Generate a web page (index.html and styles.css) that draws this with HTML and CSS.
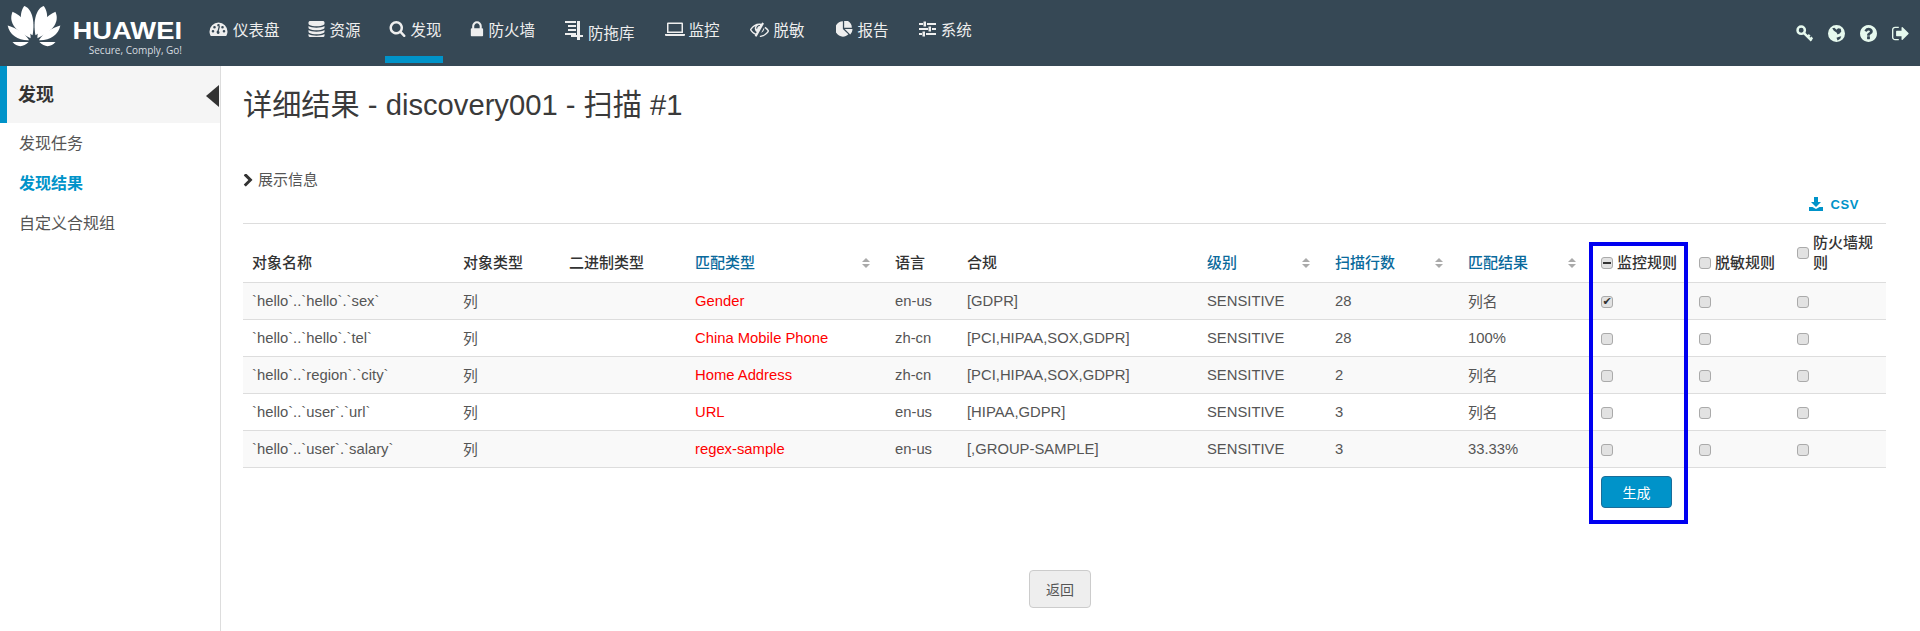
FILE: index.html
```html
<!DOCTYPE html>
<html lang="zh-CN">
<head>
    <meta charset="UTF-8">
    <title>详细结果 - discovery001 - 扫描 #1</title>
    <link rel="stylesheet" href="styles.css">
</head>
<body>

    <header class="topbar">
        <a class="brand" href="#">
            <svg class="brand__mark" viewBox="0 0 54 42">
                <g id="petals">
                    <path d="M25.500 30C14 23 10 10 17 0C24 2 28.500 14 25.500 30z"/>
                    <path d="M23.500 33C10 27 0 18 5 6C13 9 24 20 23.500 33z"/>
                    <path d="M22 35C11 35.500 2 30 0 20C8 22 18 28 22 35z"/>
                    <path d="M21.500 37L5 37C9 42 16 43 21.500 37z"/>
                </g>
                <use href="#petals" transform="matrix(-1 0 0 1 54 0)"/>
            </svg>
            <span class="brand__text">
                <span class="brand__name">HUAWEI</span>
                <span class="brand__slogan">Secure, Comply, Go!</span>
            </span>
        </a>

        <nav class="nav">
            <a class="nav__item" href="#">
                <svg class="icon icon--w19" viewBox="0 0 19 16"><path fill-rule="evenodd" d="M9.500 1.500a9 9 0 0 0-9 9c0 1.700.5 3.100 1.300 4.500h15.400c.8-1.400 1.300-2.800 1.300-4.500a9 9 0 0 0-9-9zM4 11.500a1.300 1.300 0 1 1 0-2.600 1.300 1.300 0 0 1 0 2.600zm1.500-4a1.300 1.300 0 1 1 0-2.600 1.300 1.300 0 0 1 0 2.600zm4 5.500a1.800 1.800 0 0 1-.9-3.400l1.300-4.900 1.200.3-1.300 4.900a1.800 1.800 0 0 1-.3 3.100zm0-7.500a1.300 1.300 0 1 1 0-2.600 1.300 1.300 0 0 1 0 2.600zm4 2a1.300 1.300 0 1 1 0-2.600 1.300 1.300 0 0 1 0 2.600zm1.500 4a1.300 1.300 0 1 1 0-2.600 1.300 1.300 0 0 1 0 2.600z"/></svg>
                仪表盘
            </a>
            <a class="nav__item" href="#">
                <svg class="icon icon--w17" viewBox="128 128 1536 1536"><path d="M896 768q237 0 443-43t325-127v170q0 69-103 128t-280 93.500-385 34.500-385-34.500-280-93.500-103-128v-170q119 84 325 127t443 43zm0 768q237 0 443-43t325-127v170q0 69-103 128t-280 93.500-385 34.500-385-34.500-280-93.500-103-128v-170q119 84 325 127t443 43zm0-384q237 0 443-43t325-127v170q0 69-103 128t-280 93.500-385 34.500-385-34.500-280-93.500-103-128v-170q119 84 325 127t443 43zm0-1152q208 0 385 34.500t280 93.500 103 128v128q0 69-103 128t-280 93.500-385 34.500-385-34.500-280-93.500-103-128v-128q0-69 103-128t280-93.500 385-34.500z"/></svg>
                资源
            </a>
            <a class="nav__item nav__item--active" href="#">
                <svg class="icon icon--w17" viewBox="64 128 1664 1664"><path d="M1216 832q0-185-131.500-316.500t-316.500-131.500-316.500 131.500-131.500 316.500 131.500 316.500 316.500 131.500 316.500-131.500 131.500-316.500zm512 832q0 52-38 90t-90 38q-54 0-90-38l-343-342q-179 124-399 124-143 0-273.500-55.500t-225-150-150-225-55.500-273.500 55.500-273.500 150-225 225-150 273.500-55.500 273.500 55.500 225 150 150 225 55.500 273.500q0 220-124 399l343 343q37 37 37 90z"/></svg>
                发现
            </a>
            <a class="nav__item" href="#">
                <svg class="icon icon--w14" viewBox="250 100 1300 1500"><path d="M640 768h512v-192q0-106-75-181t-181-75-181 75-75 181v192zm832 96v576q0 40-28 68t-68 28h-960q-40 0-68-28t-28-68v-576q0-40 28-68t68-28h32v-192q0-184 132-316t316-132 316 132 132 316v192h32q40 0 68 28t28 68z"/></svg>
                防火墙
            </a>
            <a class="nav__item nav__item--low" href="#">
                <svg class="icon icon--w18 icon--tall" viewBox="0 0 18 20"><path d="M0 1h11v2H0zM3 5h8v2H3zM3 9h8v2H3zM0 13h11v2H0zM12 1h3v14h3v2h-3v3h-3v-3H6v-2h6z"/></svg>
                防拖库
            </a>
            <a class="nav__item nav__item--laptop" href="#">
                <svg class="icon icon--w20" viewBox="0 0 20 16"><path fill-rule="evenodd" d="M3 1.500h14a1 1 0 0 1 1 1V12H2V2.500a1 1 0 0 1 1-1zM3.500 3v7.500h13V3zM0 13h20v1a1 1 0 0 1-1 1H1a1 1 0 0 1-1-1z"/></svg>
                监控
            </a>
            <a class="nav__item nav__item--tight" href="#">
                <svg class="icon icon--w19" viewBox="0 200 1792 1400"><path d="M555 1335l78-141q-87-63-136-159t-49-203q0-121 61-225-229 117-381 353 167 258 427 375zm389-759q0-20-14-34t-34-14q-125 0-214.500 89.500t-89.500 214.500q0 20 14 34t34 14 34-14 14-34q0-86 61-147t147-61q20 0 34-14t14-34zm363-191q0 7-1 9-106 189-316 567t-315 566l-49 89q-10 16-28 16-12 0-134-70-16-10-16-28 0-12 44-87-143-65-263.500-173t-208.500-245q-20-31-20-69t20-69q153-235 380-371t496-136q89 0 180 17l54-97q10-16 28-16 5 0 18 6t31 15.500 33 18.500 31.500 18.500 19.500 11.500q16 10 16 27zm37 447q0 139-79 253.500t-209 164.500l280-502q8 45 8 84zm448 256q0 35-20 69-39 64-109 145-150 172-347.500 267t-419.500 95l74-132q212-18 392.500-137t301.500-307q-115-179-282-294l63-112q95 64 182.500 153t144.500 184q20 34 20 69z"/></svg>
                脱敏
            </a>
            <a class="nav__item nav__item--eye" href="#">
                <svg class="icon icon--w17" viewBox="120 100 1620 1600"><path d="M768 890l546 546q-106 108-247.500 168t-298.500 60q-209 0-385.500-103t-279.500-279.500-103-385.500 103-385.500 279.500-279.500 385.500-103v762zm187 6h773q0 157-60 298.500t-168 247.500zm709-128h-768v-768q209 0 385.500 103t279.500 279.500 103 385.500z"/></svg>
                报告
            </a>
            <a class="nav__item nav__item--tight" href="#">
                <svg class="icon icon--w17" viewBox="0 0 17 16"><path d="M0 2h4v2H0zM8 2h9v2H8zM4.500 .500H7v5H4.500zM0 7h9v2H0zM13 7h4v2h-4zM9.500 5.500H12v5H9.500zM0 12h3v2H0zM7 12h10v2H7zM3.500 10.500H6v5H3.500z"/></svg>
                系统
            </a>
        </nav>

        <div class="tools">
            <a href="#"><svg class="tool tool--key" viewBox="0 0 18 18"><circle cx="5.500" cy="5.500" r="3.900"/><path d="M8.500 8.500L16.500 16.500M12.500 12.500L14.500 10.500M15.200 15.200L17.200 13.200"/></svg></a>
            <a href="#"><svg class="tool" viewBox="0 0 16 16"><path fill-rule="evenodd" d="M8 0a8 8 0 1 1 0 16A8 8 0 0 1 8 0zM4 3l1.500 2.500L8 7l1 2 2-1 1.500-2L12 3.500 9.500 3 8 4.500 6 2.500zM8 12l1 2.500 2.500-1.500 1-2.500-2 .5z"/></svg></a>
            <a href="#"><svg class="tool" viewBox="128 128 1536 1536"><path d="M1024 1376v-192q0-14-9-23t-23-9h-192q-14 0-23 9t-9 23v192q0 14 9 23t23 9h192q14 0 23-9t9-23zm256-672q0-88-55.500-163t-138.500-116-170-41q-243 0-371 213-15 24 8 42l132 100q7 6 19 6 16 0 25-12 53-68 86-92 34-24 86-24 48 0 85.500 26t37.500 59q0 38-20 61t-68 45q-63 28-115.500 86.500t-52.500 125.500v36q0 14 9 23t23 9h192q14 0 23-9t9-23q0-19 21.500-49.500t54.500-49.500q32-18 49-28.500t46-35 44.500-48 28-60.500 12.500-81zm384 192q0 209-103 385.500t-279.500 279.500-385.500 103-385.500-103-279.500-279.500-103-385.500 103-385.500 279.500-279.500 385.500-103 385.500 103 279.500 279.500 103 385.500z"/></svg></a>
            <a href="#"><svg class="tool" viewBox="64 200 1600 1400"><path d="M704 1440q0 4 1 20t.5 26.500-3 23.500-10 19.500-20.500 6.500h-320q-119 0-203.500-84.500t-84.500-203.500v-704q0-119 84.500-203.500t203.500-84.500h320q13 0 22.500 9.500t9.500 22.500q0 4 1 20t.5 26.500-3 23.500-10 19.500-20.500 6.500h-320q-66 0-113 47t-47 113v704q0 66 47 113t113 47h312l11.500 1 11.500 3 8 5.500 7 9 2 13.500zm928-544q0 26-19 45l-544 544q-19 19-45 19t-45-19-19-45v-288h-448q-26 0-45-19t-19-45v-384q0-26 19-45t45-19h448v-288q0-26 19-45t45-19 45 19l544 544q19 19 19 45z"/></svg></a>
        </div>
    </header>

    <div class="layout">
        <aside class="sidebar">
            <div class="sidebar__head">
                <h2>发现</h2>
                <span class="sidebar__toggle"></span>
            </div>
            <ul class="sidebar__menu">
                <li><a href="#">发现任务</a></li>
                <li><a class="is-current" href="#">发现结果</a></li>
                <li><a href="#">自定义合规组</a></li>
            </ul>
        </aside>

        <main class="content">
            <h1 class="content__title">详细结果 - discovery001 - 扫描 #1</h1>

            <a class="info-toggle" href="#">
                <svg class="info-toggle__icon" viewBox="300 100 1100 1600"><path d="M1363 877l-742 742q-19 19-45 19t-45-19l-166-166q-19-19-19-45t19-45l531-531-531-531q-19-19-19-45t19-45l166-166q19-19 45-19t45 19l742 742q19 19 19 45t-19 45z"/></svg>
                展示信息
            </a>

            <div class="export">
                <a class="export__link" href="#">
                    <svg class="export__icon" viewBox="0 0 14 14"><path d="M5 0h4v5h3L7 10 2 5h3zM0 10h3.500L7 12l3.500-2H14v4H0z"/></svg>
                    CSV
                </a>
            </div>

            <div class="results">
                <table class="results__table">
                    <colgroup>
                        <col class="col-name"><col class="col-type"><col class="col-bin"><col class="col-match">
                        <col class="col-lang"><col class="col-comp"><col class="col-level"><col class="col-rows">
                        <col class="col-result"><col class="col-rule"><col class="col-rule"><col class="col-rule">
                    </colgroup>
                    <thead>
                        <tr>
                            <th>对象名称</th>
                            <th>对象类型</th>
                            <th>二进制类型</th>
                            <th><div class="sort"><a href="#">匹配类型</a><i class="sort__arrows"></i></div></th>
                            <th>语言</th>
                            <th>合规</th>
                            <th><div class="sort"><a href="#">级别</a><i class="sort__arrows"></i></div></th>
                            <th><div class="sort"><a href="#">扫描行数</a><i class="sort__arrows"></i></div></th>
                            <th><div class="sort"><a href="#">匹配结果</a><i class="sort__arrows"></i></div></th>
                            <th><label class="rule-head"><span class="chk chk--minus"></span>监控规则</label></th>
                            <th><label class="rule-head"><span class="chk"></span>脱敏规则</label></th>
                            <th><label class="rule-head"><span class="chk"></span>防火墙规则</label></th>
                        </tr>
                    </thead>
                    <tbody>
                        <tr>
                            <td>`hello`..`hello`.`sex`</td><td>列</td><td></td><td class="hit">Gender</td>
                            <td>en-us</td><td>[GDPR]</td><td>SENSITIVE</td><td>28</td><td>列名</td>
                            <td><span class="chk chk--on"></span></td><td><span class="chk"></span></td><td><span class="chk"></span></td>
                        </tr>
                        <tr>
                            <td>`hello`..`hello`.`tel`</td><td>列</td><td></td><td class="hit">China Mobile Phone</td>
                            <td>zh-cn</td><td>[PCI,HIPAA,SOX,GDPR]</td><td>SENSITIVE</td><td>28</td><td>100%</td>
                            <td><span class="chk"></span></td><td><span class="chk"></span></td><td><span class="chk"></span></td>
                        </tr>
                        <tr>
                            <td>`hello`..`region`.`city`</td><td>列</td><td></td><td class="hit">Home Address</td>
                            <td>zh-cn</td><td>[PCI,HIPAA,SOX,GDPR]</td><td>SENSITIVE</td><td>2</td><td>列名</td>
                            <td><span class="chk"></span></td><td><span class="chk"></span></td><td><span class="chk"></span></td>
                        </tr>
                        <tr>
                            <td>`hello`..`user`.`url`</td><td>列</td><td></td><td class="hit">URL</td>
                            <td>en-us</td><td>[HIPAA,GDPR]</td><td>SENSITIVE</td><td>3</td><td>列名</td>
                            <td><span class="chk"></span></td><td><span class="chk"></span></td><td><span class="chk"></span></td>
                        </tr>
                        <tr>
                            <td>`hello`..`user`.`salary`</td><td>列</td><td></td><td class="hit">regex-sample</td>
                            <td>en-us</td><td>[,GROUP-SAMPLE]</td><td>SENSITIVE</td><td>3</td><td>33.33%</td>
                            <td><span class="chk"></span></td><td><span class="chk"></span></td><td><span class="chk"></span></td>
                        </tr>
                    </tbody>
                </table>

                <div class="generate">
                    <button class="btn-primary" type="button">生成</button>
                </div>

                <!-- blue annotation box drawn over the monitor column -->
                <div class="highlight"></div>
            </div>

            <div class="actions">
                <button class="btn-back" type="button">返回</button>
            </div>
        </main>
    </div>

</body>
</html>
```

FILE: styles.css
```css
*{
    box-sizing: border-box;
    padding: 0;margin: 0;
}
html, body{
    height: 100%;
    overflow: hidden;
}
body{
    display: flex;
    flex-direction: column;
    background: #fff;
    color: #555;
    font-family: "Liberation Sans", "Noto Sans CJK SC", sans-serif;
    font-size: 14.8px;
}
a{
    color: inherit;
    text-decoration: none;
}

/* top bar */
.topbar{
    display: flex;
    flex: none;
    height: 66px;
    background: #364855;
    color: #eee;
}
.brand{
    display: flex;
    flex: none;
    width: 205px;
    padding: 6px 0 0 7px;
    color: #fff;
}
.brand__mark{
    flex: none;
    width: 54px;
    height: 41px;
    fill: #fff;
}
.brand__text{
    display: flex;
    flex-direction: column;
    align-items: flex-end;
    width: 121px;
}
.brand__name{
    margin-top: 16px;
    font-size: 23px;
    font-weight: bold;
    line-height: 18px;
    transform: scaleX(1.19);
    transform-origin: right center;
}
.brand__slogan{
    margin-top: 4px;
    font-family: "Open Sans", sans-serif;
    font-size: 10px;
    line-height: 13px;
    color: #d8dde0;
}
.nav{
    display: flex;
    gap: 23px;
}
.nav__item{
    display: flex;
    align-items: center;
    height: 63px;
    padding: 4px 1px 2px 4px;
    border-bottom: 7px solid transparent;
    font-size: 15.5px;
    white-space: nowrap;
}
.nav__item--active{
    border-bottom-color: #0093c9;
}
.nav__item--low{
    margin-left: 2px;
    padding: 8px 1px 1px 4px;
}
.nav__item--eye{
    margin-left: 3px;
}
.nav__item--tight{
    margin-left: 2px;
}
.nav__item--laptop{
    margin-left: 2px;
}
.nav__item--laptop .icon{
    margin-right: 4px;
}
.icon{
    flex: none;
    height: 16px;
    margin-right: 5px;
    fill: #eee;
}
.icon--w14{ width: 14px; }
.icon--w17{ width: 17px; }
.icon--w18{ width: 18px; }
.icon--w19{ width: 19px; }
.icon--w20{ width: 20px; }
.icon--tall{
    height: 20px;
    margin-top: -3px;
}
.tools{
    display: flex;
    align-items: center;
    gap: 15px;
    margin-left: auto;
    padding-right: 11px;
}
.tools a{
    display: flex;
}
.tool{
    width: 17px;
    height: 17px;
    fill: #e6f9ee;
}
.tool--key{
    fill: none;
    stroke: #e6f9ee;
    stroke-width: 2.6;
}

/* page body */
.layout{
    display: flex;
    flex: 1;
    min-height: 0;
}
.sidebar{
    flex: none;
    width: 221px;
    border-right: 1px solid #ddd;
}
.sidebar__head{
    display: flex;
    align-items: center;
    justify-content: space-between;
    height: 57px;
    padding: 0 1px 0 11px;
    border-left: 7px solid #0093c9;
    background: #f5f5f5;
}
.sidebar__head h2{
    margin-top: -4px;
    font-size: 18px;
    color: #333;
}
.sidebar__toggle{
    width: 0;
    height: 0;
    margin-top: 3px;
    border-style: solid;
    border-width: 11px 13px 11px 0;
    border-color: transparent #333 transparent transparent;
}
.sidebar__menu{
    padding-top: 1px;
    list-style: none;
    font-size: 16px;
}
.sidebar__menu a{
    display: block;
    height: 40px;
    padding-left: 19px;
    line-height: 40px;
}
.sidebar__menu .is-current{
    color: #0093c9;
    font-weight: bold;
}
.content{
    flex: 1;
    min-width: 0;
    padding: 0 34px 0 22px;
}
.content__title{
    margin-top: 21px;
    font-size: 29.2px;
    font-weight: normal;
    line-height: 36px;
    color: #3a3a3a;
}
.info-toggle{
    display: flex;
    align-items: center;
    gap: 5px;
    margin-top: 47px;
    font-size: 15px;
    line-height: 20px;
}
.info-toggle__icon{
    width: 10px;
    height: 13px;
    fill: #333;
}
.export{
    display: flex;
    justify-content: flex-end;
    height: 34px;
    padding: 6px 27px 0 0;
    border-bottom: 1px solid #ddd;
}
.export__link{
    display: flex;
    align-items: flex-start;
    gap: 7px;
    color: #0093c9;
    font-size: 13px;
    font-weight: bold;
    line-height: 18px;
    letter-spacing: .6px;
}
.export__icon{
    width: 14px;
    height: 14px;
    margin-top: 1px;
    fill: #0093c9;
}

/* results table */
.results{
    position: relative;
}
.results__table{
    width: 100%;
    border-collapse: collapse;
    table-layout: fixed;
}
.col-name{ width: 211px; }
.col-type{ width: 106px; }
.col-bin{ width: 126px; }
.col-match{ width: 200px; }
.col-lang{ width: 72px; }
.col-comp{ width: 240px; }
.col-level{ width: 128px; }
.col-rows{ width: 133px; }
.col-result{ width: 133px; }
.col-rule{ width: 98px; }
.results__table th{
    height: 58px;
    padding: 0 9px 9px;
    border-bottom: 1px solid #ddd;
    color: #333;
    font-size: 15px;
    font-weight: 500;
    line-height: 20px;
    text-align: left;
    vertical-align: bottom;
}
.results__table td{
    height: 37px;
    padding: 0 9px;
    border-bottom: 1px solid #ddd;
    white-space: nowrap;
}
.results__table tbody tr:nth-child(odd){
    background: #f9f9f9;
}
.results__table .hit{
    color: #f00;
}
.sort{
    display: flex;
    align-items: center;
    justify-content: space-between;
    padding-right: 7px;
}
.sort a{
    color: #0a6a9c;
}
.sort__arrows{
    display: flex;
    flex-direction: column;
    gap: 2px;
}
.sort__arrows::before,
.sort__arrows::after{
    content: "";
    width: 0;
    height: 0;
    border-style: solid;
    border-color: transparent;
}
.sort__arrows::before{
    border-width: 0 4px 4px;
    border-bottom-color: #aaa;
}
.sort__arrows::after{
    border-width: 4px 4px 0;
    border-top-color: #aaa;
}
.rule-head{
    display: flex;
    align-items: center;
    gap: 4px;
}
.chk{
    display: inline-flex;
    flex: none;
    align-items: center;
    justify-content: center;
    width: 12px;
    height: 12px;
    border: 1px solid #aaa;
    border-radius: 3px;
    background: #e2e2e2;
    vertical-align: middle;
    color: #333;
}
.chk--on::after{
    content: "✔";
    font-family: "DejaVu Sans", sans-serif;
    font-size: 11px;
    line-height: 1;
}
.chk--minus::after{
    content: "";
    width: 8px;
    height: 2px;
    background: #333;
}
.generate{
    padding: 8px 0 0 1358px;
}
.btn-primary{
    display: block;
    width: 71px;
    height: 32px;
    border: 1px solid #1a6d99;
    border-radius: 4px;
    background: #0093c9;
    color: #fff;
    font-family: inherit;
    font-size: 14px;
    cursor: pointer;
}
.highlight{
    position: absolute;
    left: 1346px;
    top: 18px;
    width: 99px;
    height: 282px;
    border: 4px solid #0000f0;
    pointer-events: none;
}
.actions{
    display: flex;
    justify-content: center;
    margin-top: 62px;
}
.btn-back{
    width: 62px;
    height: 38px;
    margin-right: 9px;
    border: 1px solid #ccc;
    border-radius: 4px;
    background: #eee;
    color: #555;
    font-family: inherit;
    font-size: 14px;
    cursor: pointer;
}
```
